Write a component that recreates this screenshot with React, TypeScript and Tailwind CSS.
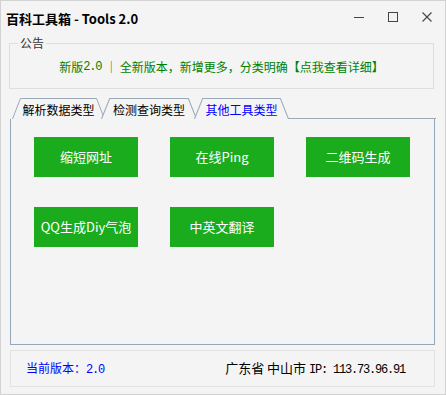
import React from "react";

const cjk = { fontFamily: '"Noto Sans CJK SC", "Microsoft YaHei", sans-serif' };
const mono = { fontFamily: '"Liberation Mono", "Noto Sans CJK SC", monospace' };

const tools = ["缩短网址", "在线Ping", "二维码生成", "QQ生成Diy气泡", "中英文翻译"];

const tabs = [
  { label: "解析数据类型", active: false, cls: "w-[93px]" },
  { label: "检测查询类型", active: false, cls: "w-[96px] -ml-[4px]" },
  { label: "其他工具类型", active: true, cls: "w-[95px] -ml-[3px]" },
];

function Tab({ label, active, cls }: { label: string; active: boolean; cls: string }) {
  return (
    <div className={`relative h-[21px] ${cls}`}>
      <svg className="absolute inset-0" width="100%" height="21" viewBox="0 0 94 21" preserveAspectRatio="none">
        <path d="M0.5 21 L8.5 0.5 L85.5 0.5 L93.5 21" fill="#f4f4f4" stroke="#9aaab8" strokeWidth="1" />
      </svg>
      <span
        className={`relative flex h-full items-center justify-center pt-[2px] text-[12px] ${
          active ? "text-[#0000ff]" : "text-black"
        }`}
        style={cjk}
      >
        {label}
      </span>
    </div>
  );
}

export default function App() {
  return (
    <div className="w-[446px] h-[395px] bg-[#f4f4f4] border border-[#d2d2d2] flex flex-col" style={cjk}>
      {/* title bar */}
      <div className="h-[32px] flex items-center justify-between pl-[5px]">
        <span className="text-[13px] font-bold text-black mt-[4px]">百科工具箱 - Tools 2.0</span>
        <div className="flex items-center h-full text-[#555]">
          <div className="w-[34px] flex justify-center">
            <div className="w-[10px] h-px bg-[#444]" />
          </div>
          <div className="w-[34px] flex justify-center">
            <div className="w-[10px] h-[10px] border border-[#444]" />
          </div>
          <div className="w-[34px] flex justify-center mr-[1px]">
            <svg width="10" height="10" viewBox="0 0 10 10">
              <path d="M0.5 0.5 L9.5 9.5 M9.5 0.5 L0.5 9.5" stroke="#444" strokeWidth="1.1" />
            </svg>
          </div>
        </div>
      </div>

      {/* notice */}
      <div className="relative mt-[10px] ml-[8px] w-[425px] h-[46px] border border-[#dedede]">
        <span className="absolute -top-[9px] left-[8px] bg-[#f4f4f4] px-[2px] text-[12px] leading-[16px] text-[#333]">
          公告
        </span>
        <div className="h-full flex items-center justify-center text-[12px] text-[#008000] pt-[2px]">
          新版<span style={mono} className="tracking-[-1.2px] mr-[4px]">2.0</span> ｜ 全新版本，新增更多，分类明确【点我查看详细】
        </div>
      </div>

      {/* tabs */}
      <div className="mt-[9px] ml-[10px] flex h-[21px] w-[425px] items-end relative">
        <div className="flex ml-[1px]">
          {tabs.map((t) => (
            <Tab key={t.label} label={t.label} active={t.active} cls={t.cls} />
          ))}
        </div>
        <div className="absolute bottom-0 left-[277px] right-0 h-px bg-[#9aaab8]" />
      </div>

      {/* tab panel */}
      <div className="ml-[9px] w-[425px] h-[226px] border border-t-0 border-[#94a8ba] pt-[18px] pl-[23px]">
        <div className="grid grid-cols-[104px_104px_104px] gap-x-[32px] gap-y-[30px]">
          {tools.map((t) => (
            <button
              key={t}
              className="h-[40px] w-[104px] bg-[#1bac1d] text-white text-[13px] flex items-center justify-center"
              style={cjk}
            >
              {t}
            </button>
          ))}
        </div>
      </div>

      {/* status bar */}
      <div className="mt-[5px] ml-[9px] w-[425px] h-[37px] border border-[#e2e2e2] flex items-center justify-between pl-[15px] pr-[29px]">
        <span className="text-[12px] text-[#0000ff]">
          当前版本：<span style={mono} className="text-[12px] tracking-[-1.2px]">2.0</span>
        </span>
        <span className="text-[13px] text-black">
          广东省 中山市{" "}
          <span style={mono} className="text-[12px] tracking-[-1.2px]">IP: 113.73.96.91</span>
        </span>
      </div>
    </div>
  );
}
